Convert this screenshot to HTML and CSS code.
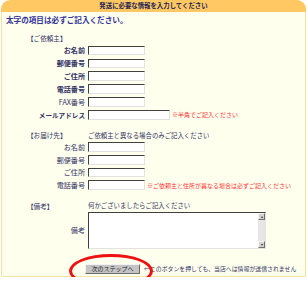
FILE: index.html
```html
<!DOCTYPE html>
<html lang="ja">

<head>
    <meta charset="UTF-8">
    <title>発送情報の入力</title>
    <link rel="stylesheet" href="styles.css">
</head>

<body>
    <div class="box">
        <!-- 見出し -->
        <div class="box-head">発送に必要な情報を入力してください</div>

        <div class="box-body">
            <p class="lead">太字の項目は必ずご記入ください。</p>

            <!-- ご依頼主 -->
            <div class="form form-main">
                <div class="sec">【ご依頼主】</div>
                <div></div>
                <label class="req">お名前</label>
                <div><input type="text" class="field"></div>
                <label class="req">郵便番号</label>
                <div><input type="text" class="field"></div>
                <label class="req">ご住所</label>
                <div><input type="text" class="field"></div>
                <label class="req">電話番号</label>
                <div><input type="text" class="field"></div>
                <label>FAX番号</label>
                <div><input type="text" class="field"></div>
                <label class="req kana">メールアドレス</label>
                <div><input type="text" class="field wide"><span class="note-red">※半角でご記入ください</span></div>
            </div>

            <!-- お届け先 -->
            <div class="form form-ship">
                <div class="sec">【お届け先】</div>
                <div class="note">ご依頼主と異なる場合のみご記入ください</div>
                <label>お名前</label>
                <div><input type="text" class="field"></div>
                <label>郵便番号</label>
                <div><input type="text" class="field"></div>
                <label>ご住所</label>
                <div><input type="text" class="field"></div>
                <label>電話番号</label>
                <div><input type="text" class="field"><span class="note-red">※ご依頼主と住所が異なる場合は必ずご記入ください</span></div>
            </div>

            <!-- 備考 -->
            <div class="form form-memo">
                <div class="sec">【備考】</div>
                <div class="note">何かございましたらご記入ください</div>
                <label>備考</label>
                <div class="memo">
                    <textarea></textarea>
                    <div class="scroll">
                        <span class="arrow">&#9652;</span>
                        <span class="arrow">&#9662;</span>
                    </div>
                </div>
            </div>

            <!-- 次へ -->
            <div class="submit">
                <button type="button" class="btn">次のステップへ</button>
                <span class="note">←このボタンを押しても、当店へは情報が送信されません</span>
            </div>
        </div>

        <!-- 赤丸 -->
        <div class="circle"></div>
    </div>
</body>

</html>
```

FILE: styles.css
```css
:root {
    --navy: #333366;
    --red: #ff3333;
    --cream: #ffffee;
}

* {
    margin: 0;
    padding: 0;
    box-sizing: border-box;
}

body {
    background: #ffffff;
    font-family: "Noto Sans CJK JP", "Noto Sans", sans-serif;
    color: var(--navy);
}

.box {
    position: relative;
    width: 305px;
    margin-left: 1px;
}

.box-head {
    height: 12px;
    background: #ffc862;
    border-radius: 9px 9px 0 0;
    text-align: center;
    font-size: 6.4px;
    font-weight: bold;
    line-height: 12px;
    color: #222255;
}

.box-body {
    height: 265px;
    background: var(--cream);
    border: 1px solid #f3e2a4;
    border-top: 0;
}

.lead {
    padding: 1.5px 0 0 4px;
    font-size: 7.6px;
    font-weight: bold;
    line-height: 11px;
    color: #333399;
}

/* 入力欄の表 */
.form {
    display: grid;
    grid-template-columns: 84px 1fr;
    column-gap: 2px;
    align-items: center;
}

.form-main {
    margin-top: 7.5px;
    grid-template-rows: 12px;
    grid-auto-rows: 12.9px;
}

.form-ship {
    margin-top: 8.4px;
    grid-template-rows: 11px;
    grid-auto-rows: 12.7px;
}

.form-memo {
    margin-top: 8.2px;
    grid-template-rows: 12px 37px;
    margin-bottom: 15px;
}

.sec {
    padding-left: 25px;
    font-size: 6.6px;
}

.form label {
    text-align: right;
    padding-right: 1px;
    font-size: 7.1px;
    line-height: 10px;
}

.form label.req {
    font-weight: bold;
}

.form label.kana {
    font-size: 6.6px;
}

.form > div {
    display: flex;
    align-items: center;
    white-space: nowrap;
}

.note {
    font-size: 6.4px;
}

.note-red {
    margin-left: 2px;
    font-size: 6px;
    color: var(--red);
}

.field {
    width: 57px;
    height: 9.5px;
    background: #ffffff;
    border: 1px solid;
    border-color: #404040 #e2e2e2 #e2e2e2 #404040;
    outline: none;
}

.field.wide {
    width: 82px;
}

/* 備考欄 */
.form .memo {
    display: flex;
    align-items: stretch;
    width: 178px;
    height: 37px;
    background: #ffffff;
    border: 1px solid;
    border-color: #404040 #e2e2e2 #e2e2e2 #404040;
}

.memo textarea {
    flex: 1;
    border: 0;
    resize: none;
    outline: none;
    background: #ffffff;
}

.scroll {
    width: 7px;
    display: flex;
    flex-direction: column;
    justify-content: space-between;
    background: #e6e6e6;
}

.arrow {
    height: 7px;
    background: #d4d4d4;
    border: 1px solid;
    border-color: #f4f4f4 #707070 #707070 #f4f4f4;
    font-size: 4px;
    line-height: 5px;
    text-align: center;
    color: #333333;
}

/* ボタン */
.submit {
    display: flex;
    align-items: center;
    padding-left: 83px;
    white-space: nowrap;
}

.btn {
    width: 55px;
    height: 10px;
    background: #c4c4c4;
    border: 1px solid;
    border-color: #f2f2f2 #6a6a6a #6a6a6a #f2f2f2;
    font-family: inherit;
    font-size: 6px;
    line-height: 8px;
    color: #222222;
}

.submit .note {
    margin-left: 4px;
    font-size: 5.9px;
}

.circle {
    position: absolute;
    left: 68px;
    top: 254px;
    width: 84px;
    height: 34px;
    border: 3px solid #ee1111;
    border-radius: 50%;
}
```
